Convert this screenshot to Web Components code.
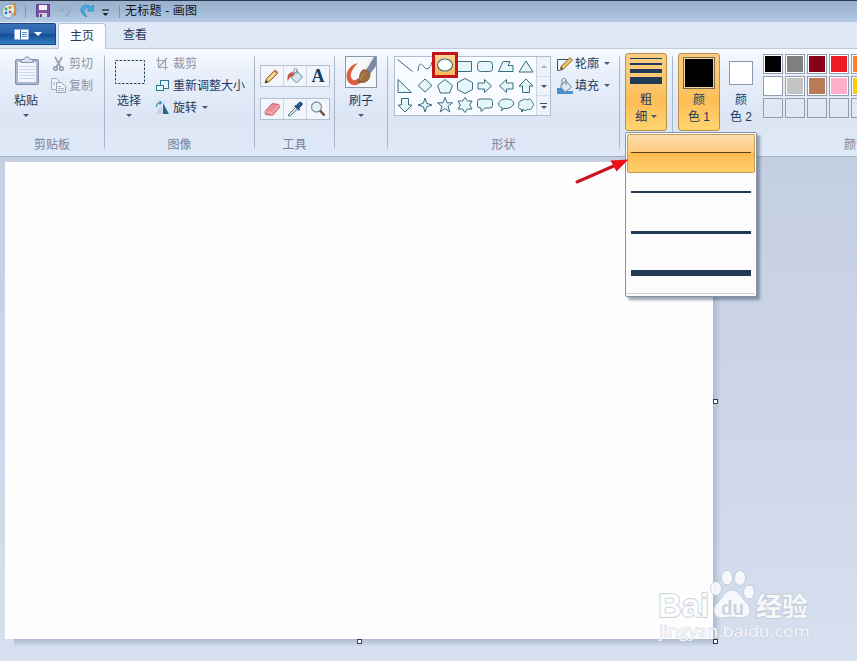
<!DOCTYPE html>
<html lang="zh-CN">
<head>
<meta charset="utf-8">
<title>无标题 - 画图</title>
<style>
    html, body {
        margin: 0;
        height: 100%;
        overflow: hidden;
    }
    body {
        font: 12px/16px "Liberation Sans", "Noto Sans CJK SC", sans-serif;
        color: #1e395b;
    }
</style>
</head>
<body>
<paint-app></paint-app>
<script>
const ink = 'fill="#e6f7fb" stroke="#3b6a82" stroke-width="1" stroke-linejoin="miter"';

const ICONS = {
    palette: `<path d="M9 1C4 1 1 5 1 9c0 4 4 7 8 6 3-1 1-3 2-4s4 0 4-4c0-3-2-6-6-6z" fill="#d6e9ee" stroke="#7398a7"/>
        <circle cx="5" cy="6" r="1.4" fill="#4fa64a"/><circle cx="9" cy="4.5" r="1.4" fill="#d58c20"/>
        <circle cx="5" cy="10" r="1.4" fill="#3675c7"/><circle cx="9" cy="9" r="1.3" fill="#b04a67"/>
        <path d="M14 0v13" stroke="#d98b39" stroke-width="2"/>`,
    save: `<path d="M1.500 1.500h13v12h-13z" fill="#7f51a5" stroke="#61408d"/><path d="M4 2h8v5H4z" fill="#f5f1fa"/><path d="M4 10h8v4H4z" fill="#dcd0e9"/><path d="M5 11h2v3H5z" fill="#61408d"/>`,
    undo: `<path d="M1.500 2v6h6L5.500 6c3-2.500 6-.5 5.500 2.500-.3 2-1.500 3.500-3 5 4-1.500 6-4 6-6.500C14 2 8 .5 3.700 4z" fill="#a3b4cf" stroke="#8fa2c0" stroke-width=".7"/>`,
    redo: `<path d="M14.500 2v6h-6l2-2C7.500 3.500 4.700 5.500 5 8.500c.3 2 1.500 3.500 3 5.500-4-1.500-6-4.500-6-7C2 2 8 .5 12.300 4z" fill="#46b0de" stroke="#1f80b8" stroke-width=".7"/>`,
    custom: `<path d="M1 2h7" stroke="#222" stroke-width="1.300"/><path d="M1.500 5h6l-3 3z" fill="#222"/>`,
    paste: `<rect x="1.500" y="3.500" width="23" height="25" rx="1.500" fill="#a9b6cf" stroke="#8191b0"/>
        <path d="M4 6h18v20H4z" fill="#f3f6fc"/><path d="M5 10.500h16M5 13.500h16M5 16.500h16M5 19.500h16M5 22.500h16" stroke="#ccd6e9"/>
        <path d="M7 6.500V3.500h3C10 0 16 0 16 3.500h3v3z" fill="#dce2ed" stroke="#8191b0"/>`,
    cut: `<path d="M4 1l5.500 10M11 1L5.500 11" stroke="#98a3b6" stroke-width="1.700" fill="none"/><circle cx="4.500" cy="12.500" r="1.800" fill="none" stroke="#8a96ac" stroke-width="1.400"/><circle cx="10.500" cy="12.500" r="1.800" fill="none" stroke="#8a96ac" stroke-width="1.400"/>`,
    copy: `<path d="M.5.5h5l3 3v8h-8z" fill="#eff3fa" stroke="#a3aec2"/><path d="M5.500 4.500h5l4 4v6h-9z" fill="#eff3fa" stroke="#97a4bb"/><path d="M7 8.500h3M7 10.500h6M7 12.500h6M2 4.500h2M2 6.500h2" stroke="#a7b3c8"/>`,
    select: `<rect x=".5" y=".5" width="29" height="23" fill="none" stroke="#26485f" stroke-dasharray="2.500 1.500"/>`,
    crop: `<path d="M3.500 1v10.500H13M1 4.500h9.500V14M4 11l8-9" fill="none" stroke="#9ba5b6" stroke-width="1.200"/>`,
    resize: `<rect x="5.500" y="2.500" width="8" height="8" fill="#e7f6fb" stroke="#31748f"/><rect x="1.500" y="7.500" width="7" height="5" fill="#e7f6fb" stroke="#31748f"/>`,
    rotate: `<path d="M7 5.500V14H1z" fill="#c5cedd"/><path d="M8 3v11h6z" fill="#236593"/><path d="M1.500 7c0-4 2.500-4.500 4.500-4M4.500.8l2 2-2 1.700" fill="none" stroke="#3c8dbb" stroke-width="1.200"/>`,
    pencil: `<path d="M1 15l1.500-4.500L11 2l3 3-8.500 8.500z" fill="#edc268" stroke="#795a2d" stroke-width=".9"/><path d="M1 15l1-3 2 2z" fill="#333"/><path d="M10 3l1.500-1.500 3 3L13 6z" fill="#ce7a66"/><path d="M4 12l7-7" stroke="#fff0bd"/>`,
    bucket: `<path d="M5 8l5-5 5.500 6-6 6-5-5z" fill="#d5e6ee" stroke="#66869a"/><path d="M7 8V2c0-2 3-2 3 0v4" fill="none" stroke="#789"/><path d="M7 4.500C2 3 0 7 .5 13 2 12 2 9 6 8z" fill="#c8583d"/>`,
    eraser: `<path d="M1 10.500L8 2.500l7 1 .5 3-7 8-7-1z" fill="#ec8b91" stroke="#ae5962" stroke-width=".8"/><path d="M1.500 10.500l6.500 1 7-7.500M8 11.500v3" fill="none" stroke="#f9c0c2"/>`,
    dropper: `<path d="M9 5l3-3.500c2-1 4 1 3 2.500L12 7z" fill="#245f94" stroke="#1c4674"/><path d="M8 4.500l4.500 4.500" stroke="#1c4674" stroke-width="2"/><path d="M8.500 6.500L2 13l-.5 2 2-.5L10.500 8z" fill="#dcebf2" stroke="#56738a"/>`,
    lens: `<circle cx="6.500" cy="6" r="5" fill="#e3eff8" stroke="#8b949f" stroke-width="1.300"/><path d="M10 9.500l4.500 5" stroke="#6d533e" stroke-width="2.500"/>`,
    brush: `<rect x=".5" y=".5" width="31" height="31" fill="#f6f7f9" stroke="#8b98aa"/>
        <path d="M13 7C5 9 0 16 2 23s10 8 14 3l-3-4c-2 3-6 3-7-1s2-9 7-14z" fill="#d9603a"/>
        <path d="M28 1h3v9l-6 8-5-4z" fill="#7c8aa5"/><path d="M28 1L20 14" stroke="#e9edf4" stroke-width="2"/>
        <path d="M18 14c3-1 6 1 7 4 0 6-4 10-12 8 2-3 1-10 5-12z" fill="#9c6c3d" stroke="#6c4a2c" stroke-width=".7"/><path d="M20 17c-3 1-3 5-5 7" stroke="#c99a62" fill="none"/>`,
    outline: `<path d="M11 3.500H.5v11c3 0 5-1 6-1.500" fill="none" stroke="#2d526b"/><path d="M3.500 13l1-3 8.500-8.500L15.500 4 7 12.500z" fill="#edc268" stroke="#795a2d" stroke-width=".9"/><path d="M3.500 13l.7-2 1.300 1.300z" fill="#222"/>`,
    fill: `<path d="M0 10h4l3 3h9v3H0z" fill="#4c8dcd"/><path d="M4 7l5-4 5.500 6-6 5-4.500-4z" fill="#dce8ef" stroke="#64839b"/><path d="M5 7V2c0-2 4-2 4 0v5" fill="none" stroke="#64839b"/>`,
    line: `<path d="M.5 1.500l15 12" ${ink}/>`,
    curve: `<path d="M1 13C2 3 5 6 7 9s6 3 8-5" ${ink} style="fill:none"/>`,
    oval: `<ellipse cx="8" cy="8" rx="7.500" ry="6" fill="#fff" stroke="#4d6e71" stroke-width="1.200"/>`,
    rect: `<path d="M.5 3.500h14v10H.5z" ${ink}/>`,
    round: `<rect x=".5" y="3.500" width="15" height="10" rx="3" ${ink}/>`,
    polygon: `<path d="M5 3.500h7l-2 4h5v6H.5z" ${ink}/>`,
    triangle: `<path d="M8 3l7 11H1z" ${ink}/>`,
    rtriangle: `<path d="M1 1.500v13h13.500z" ${ink}/>`,
    diamond: `<path d="M8 1l7 6.500L8 14 1 7.500z" ${ink}/>`,
    pentagon: `<path d="M8 1.500l7.500 6-3 7.500h-9l-3-7.500z" ${ink}/>`,
    hexagon: `<path d="M8 .5l7.500 4v7L8 15.500l-7.500-4v-7z" ${ink}/>`,
    right: `<path d="M1 5h6.500V1.500l7 6.500-7 6.500V11H1z" ${ink}/>`,
    left: `<path d="M15 5H8.500V1.500L1.500 8l7 6.500V11H15z" ${ink}/>`,
    up: `<path d="M8 1l7 7h-3.500v6.500h-7V8H1z" ${ink}/>`,
    down: `<path d="M8 15l7-7h-3.500V1.500h-7V8H1z" ${ink}/>`,
    star4: `<path d="M8 1l1.700 5.300L15 8 9.700 9.700 8 15 6.300 9.700 1 8l5.300-1.700z" ${ink}/>`,
    star5: `<path d="M8 .5l2 5.300h5.500L11 9.300l1.800 5.700L8 11.500 3.200 15 5 9.300.5 5.800H6z" ${ink}/>`,
    star6: `<path d="M8 .5L10.500 4H15l-2.300 4 2.300 4h-4.500L8 15.500 5.500 12H1l2.300-4L1 4h4.500z" ${ink}/>`,
    callout: `<path d="M3 2h10q2.500 0 2.500 2.500v4Q15.500 11 13 11H8l-4 3.500V11H3Q.5 11 .5 8.500v-4Q.5 2 3 2z" ${ink}/>`,
    bubble: `<path d="M3 14l1.500-3C-2 9 0 2 8 2s10 5 5 8q-3 2-7 1.500z" ${ink}/>`,
    cloud: `<path d="M3 12C0 12 0 9 1 8c-1-3 1-5 3-4 1-3 4-2 5-1 3-2 5 0 5 2 2 1 2 4 0 5 0 3-3 3-4 2-2 2-5 2-5 0l-1 3z" ${ink}/>`,
};

class PaintIcon extends HTMLElement {
    connectedCallback() {
        const w = this.getAttribute('w') || 16;
        const h = this.getAttribute('h') || 16;
        this.attachShadow({mode: 'open'}).innerHTML = `
            <style>
                :host { display: inline-flex; flex: none; }
                svg { display: block; overflow: visible; }
            </style>
            <svg width="${w}" height="${h}" viewBox="0 0 ${w} ${h}">${ICONS[this.getAttribute('name')]}</svg>`;
    }
}

class DownArrow extends HTMLElement {
    connectedCallback() {
        this.attachShadow({mode: 'open'}).innerHTML = `
            <style>
                :host {
                    display: inline-block;
                    flex: none;
                    border: solid transparent;
                    border-width: 3px 3px 0;
                    border-top-color: #4c586c;
                }
            </style>`;
    }
}

class TitleBar extends HTMLElement {
    connectedCallback() {
        this.attachShadow({mode: 'open'}).innerHTML = `
            <style>
                :host {
                    display: flex;
                    align-items: center;
                    height: 22px;
                    box-sizing: border-box;
                    border-top: 1px solid #2c3a52;
                    background: linear-gradient(#9ab1cd, #a3bad6 50%, #b6cce6);
                    color: #10141c;
                    letter-spacing: .2px;
                }
                .tools { display: flex; align-items: center; width: 119px; margin-top: -1px; }
                .sep { width: 1px; height: 13px; background: #8092ab; }
                .name { margin-top: -2px; }
            </style>
            <div class="tools">
                <paint-icon name="palette" style="margin-left: 1px"></paint-icon>
                <span class="sep" style="margin: 0 9px 0 8px"></span>
                <paint-icon name="save"></paint-icon>
                <paint-icon name="undo" style="margin-left: 6px"></paint-icon>
                <paint-icon name="redo" style="margin-left: 6px"></paint-icon>
                <paint-icon name="custom" w="9" h="9" style="margin: 2px 0 0 6px"></paint-icon>
            </div>
            <span class="sep" style="margin-right: 5px"></span>
            <span class="name"><slot></slot></span>`;
    }
}

class TabStrip extends HTMLElement {
    connectedCallback() {
        this.attachShadow({mode: 'open'}).innerHTML = `
            <style>
                :host {
                    display: flex;
                    align-items: flex-end;
                    height: 27px;
                    background: #dfe8f6;
                    border-bottom: 1px solid #bccbe0;
                    box-sizing: border-box;
                }
                .file {
                    display: flex;
                    align-items: center;
                    justify-content: center;
                    gap: 5px;
                    width: 56px;
                    height: 22px;
                    margin-bottom: 3px;
                    box-sizing: border-box;
                    border: 1px solid #1c4787;
                    border-left: 0;
                    border-radius: 0 2px 0 0;
                    background: linear-gradient(#3a72b8, #2560a9 48%, #134c95 52%, #3280c5);
                }
                .file down-arrow { border-top-color: #fff; border-width: 4px 4px 0; }
                .tab { height: 24px; line-height: 23px; text-align: center; width: 58px; }
                .active {
                    width: 46px;
                    height: 25px;
                    line-height: 24px;
                    margin: 0 0 -1px 2px;
                    background: #fafcff;
                    border: 1px solid #b4c5dc;
                    border-bottom: 0;
                    border-radius: 3px 3px 0 0;
                }
            </style>
            <div class="file">
                <svg width="15" height="11"><path d="M.5.5h14v10H.5z" fill="#fff"/><path d="M6.500 1v9" stroke="#2b68ac"/><path d="M8 3.500h5M8 5.500h5M8 7.500h5" stroke="#6b8fbd"/></svg>
                <down-arrow></down-arrow>
            </div>
            <div class="tab active">主页</div>
            <div class="tab">查看</div>`;
    }
}

class RibbonGroup extends HTMLElement {
    connectedCallback() {
        this.attachShadow({mode: 'open'}).innerHTML = `
            <style>
                :host {
                    display: flex;
                    flex-direction: column;
                    flex: none;
                    height: 107px;
                    box-sizing: border-box;
                    border: solid transparent;
                    border-image: linear-gradient(transparent 6%, #a9b7cd 9%, #a9b7cd 90%, transparent 94%) 1;
                    border-width: 0 1px 0 0;
                }
                .body { display: flex; height: 89px; box-sizing: border-box; padding-top: 4px; align-items: flex-start; }
                .label { text-align: center; color: #75839b; line-height: 15px; }
            </style>
            <div class="body"><slot></slot></div>
            <div class="label">${this.getAttribute('label') || ''}</div>`;
    }
}

// large icon on top, caption and arrow below
class BigButton extends HTMLElement {
    connectedCallback() {
        this.attachShadow({mode: 'open'}).innerHTML = `
            <style>
                :host {
                    display: flex;
                    flex-direction: column;
                    align-items: center;
                    flex: none;
                    height: 78px;
                    box-sizing: border-box;
                    border: 1px solid transparent;
                    border-radius: 3px;
                }
                :host([checked]) {
                    border-color: #b99147;
                    background: linear-gradient(#f8cd84, #fbc469 45%, #fdbd55 60%, #ffd46f);
                }
                .icon { display: flex; justify-content: center; height: 38px; align-items: center; }
                .text { line-height: 17px; text-align: center; }
                :host([arrow]) .text { margin-top: 1px; }
                .arrow { line-height: 11px; }
                .arrow down-arrow { vertical-align: 2px; }
            </style>
            <div class="icon"><slot name="icon"></slot></div>
            <div class="text"><slot></slot></div>
            ${this.hasAttribute('arrow') ? '<div class="arrow"><down-arrow></down-arrow></div>' : ''}`;
    }
}

class SmallButton extends HTMLElement {
    connectedCallback() {
        this.attachShadow({mode: 'open'}).innerHTML = `
            <style>
                :host { display: flex; align-items: center; height: 22px; gap: 2px; white-space: nowrap; }
                :host([disabled]) { color: #8b95a6; }
                down-arrow { margin: 0 0 2px 3px; }
            </style>
            <paint-icon name="${this.getAttribute('icon')}"></paint-icon>
            <slot></slot>
            ${this.hasAttribute('arrow') ? '<down-arrow></down-arrow>' : ''}`;
    }
}

class ToolBox extends HTMLElement {
    connectedCallback() {
        this.attachShadow({mode: 'open'}).innerHTML = `
            <style>
                :host { display: flex; flex-direction: column; gap: 11px; padding: 12px 0 0 5px; }
                .row { display: flex; border: 1px solid #b2bfd2; background: #f2f6fc; }
                .cell { display: flex; align-items: center; justify-content: center; width: 22px; height: 20px; }
                .cell + .cell { border-left: 1px solid #cdd7e6; }
                b { font: bold 18px/20px "Liberation Serif", serif; color: #173a60; }
            </style>
            <div class="row">
                <div class="cell"><paint-icon name="pencil"></paint-icon></div>
                <div class="cell"><paint-icon name="bucket"></paint-icon></div>
                <div class="cell"><b>A</b></div>
            </div>
            <div class="row">
                <div class="cell"><paint-icon name="eraser"></paint-icon></div>
                <div class="cell"><paint-icon name="dropper"></paint-icon></div>
                <div class="cell"><paint-icon name="lens"></paint-icon></div>
            </div>`;
    }
}

class ShapeGallery extends HTMLElement {
    connectedCallback() {
        const shapes = ['line', 'curve', 'oval', 'rect', 'round', 'polygon', 'triangle',
            'rtriangle', 'diamond', 'pentagon', 'hexagon', 'right', 'left', 'up',
            'down', 'star4', 'star5', 'star6', 'callout', 'bubble', 'cloud'];
        this.attachShadow({mode: 'open'}).innerHTML = `
            <style>
                :host {
                    display: flex;
                    box-sizing: border-box;
                    width: 157px;
                    height: 60px;
                    border: 1px solid #afbdd1;
                    background: #f8fbff;
                }
                .grid {
                    display: grid;
                    grid-template: repeat(3, 19.700px) / repeat(7, 20.100px);
                    place-items: center;
                    width: 141px;
                    margin-top: -1px;
                }
                .cell { display: flex; position: relative; }
                .oval { background: linear-gradient(#f9d596, #fbbb58); padding: 2px; margin: -3px -2px -1px; outline: 3px solid #c3161c; z-index: 1; }
                .scroll { display: flex; flex-direction: column; flex: 1; background: #eef3fb; border-left: 1px solid #c8d3e3; }
                .scroll div { display: flex; flex: 1; flex-direction: column; align-items: center; justify-content: center; gap: 2px; }
                .scroll div + div { border-top: 1px solid #d3dcea; }
                i { width: 7px; height: 1px; background: #3e4b60; }
            </style>
            <div class="grid">${shapes.map(s => `<div class="cell ${s}"><paint-icon name="${s}"></paint-icon></div>`).join('')}</div>
            <div class="scroll">
                <div><down-arrow style="transform: rotate(180deg); opacity: .4"></down-arrow></div>
                <div><down-arrow></down-arrow></div>
                <div><i></i><down-arrow></down-arrow></div>
            </div>`;
    }
}

class ColorPalette extends HTMLElement {
    connectedCallback() {
        const colors = ['#000000', '#7f7f7f', '#880015', '#ed1c24', '#ff7f27',
            '#ffffff', '#c3c3c3', '#b97a57', '#ffaec9', '#ffc90e',
            '', '', '', '', ''];
        this.attachShadow({mode: 'open'}).innerHTML = `
            <style>
                :host { display: grid; grid-template-columns: repeat(5, 20px); gap: 2px; }
                span { height: 20px; box-sizing: border-box; border: 1px solid #929eaf; padding: 1px; }
                span.set { background: linear-gradient(var(--c), var(--c)) content-box, #fff; }
                span.none { background: #e0e8f5; }
            </style>
            ${colors.map(c => `<span class="${c ? 'set' : 'none'}" style="--c: ${c || 'transparent'}"></span>`).join('')}`;
    }
}

class SizeMenu extends HTMLElement {
    connectedCallback() {
        this.attachShadow({mode: 'open'}).innerHTML = `
            <style>
                :host {
                    display: block;
                    box-sizing: border-box;
                    width: 132px;
                    height: 165px;
                    padding: 1px;
                    border: 1px solid #8794a4;
                    border-radius: 2px;
                    background: #fcfcfd;
                    box-shadow: 3px 3px 3px rgba(60, 75, 105, .5);
                }
                div { display: flex; align-items: center; height: 40px; padding: 0 4px; box-sizing: border-box; }
                .on { height: 39px; border: 1px solid #c59b50; border-radius: 2px; padding: 0 3px; background: linear-gradient(#fbdcaa, #fccb7f 45%, #fbbb4f 50%, #ffd06d); }
                span { flex: 1; background: #213b57; }
                footer { border-bottom: 1px solid #ccd2dd; }
            </style>
            <div class="on"><span style="height: 1px; background: #594117; margin-bottom: 2px"></span></div>
            <div><span style="height: 2px; margin-bottom: 2px"></span></div>
            <div><span style="height: 3px; margin-bottom: 1px"></span></div>
            <div><span style="height: 6px"></span></div>
            <footer></footer>`;
    }
}

class RibbonBar extends HTMLElement {
    connectedCallback() {
        this.attachShadow({mode: 'open'}).innerHTML = `
            <style>
                :host {
                    display: flex;
                    height: 108px;
                    box-sizing: border-box;
                    overflow: hidden;
                    background: linear-gradient(#f7faff, #e8effa 25%, #dbe5f4 65%, #e0e9f7);
                    border-bottom: 1px solid #a4b2c8;
                }
                .col { display: flex; flex-direction: column; }
                .sizes { display: flex; flex-direction: column; gap: 4px; width: 32px; margin-top: -4px; }
                .sizes i { background: #213b57; }
                .swatch { box-sizing: border-box; border: 1px solid #8b98aa; }
            </style>
            <ribbon-group label="剪贴板" style="width: 105px">
                <big-button arrow style="width: 46px; margin-left: 3px">
                    <paint-icon slot="icon" name="paste" w="26" h="30" style="margin: -4px 0 0 1px"></paint-icon>粘贴
                </big-button>
                <div class="col">
                    <small-button icon="cut" disabled style="margin-left: 2px">剪切</small-button>
                    <small-button icon="copy" disabled style="margin-left: 2px">复制</small-button>
                </div>
            </ribbon-group>
            <ribbon-group label="图像" style="width: 150px">
                <big-button arrow style="width: 44px; margin-left: 2px">
                    <paint-icon slot="icon" name="select" w="30" h="24" style="margin: -2px 0 0 2px"></paint-icon>选择
                </big-button>
                <div class="col" style="margin-left: 4px">
                    <small-button icon="crop" disabled>裁剪</small-button>
                    <small-button icon="resize">重新调整大小</small-button>
                    <small-button icon="rotate" arrow>旋转</small-button>
                </div>
            </ribbon-group>
            <ribbon-group label="工具" style="width: 80px">
                <tool-box></tool-box>
            </ribbon-group>
            <ribbon-group style="width: 53px">
                <big-button arrow style="width: 46px; margin-left: 3px">
                    <paint-icon slot="icon" name="brush" w="32" h="32" style="margin-top: -2px"></paint-icon>刷子
                </big-button>
            </ribbon-group>
            <ribbon-group label="形状" style="width: 232px">
                <shape-gallery style="margin: 3px 0 0 6px"></shape-gallery>
                <div class="col" style="margin-left: 6px">
                    <small-button icon="outline" arrow>轮廓</small-button>
                    <small-button icon="fill" arrow>填充</small-button>
                </div>
            </ribbon-group>
            <ribbon-group style="width: 53px">
                <big-button checked style="width: 42px; margin-left: 5px">
                    <span class="sizes" slot="icon"><i style="height: 1px"></i><i style="height: 2px"></i><i style="height: 4px"></i><i style="height: 7px"></i></span>
                    粗<br>细 <down-arrow style="vertical-align: 3px"></down-arrow>
                </big-button>
            </ribbon-group>
            <ribbon-group label="颜色" style="width: 367px">
                <big-button checked style="width: 42px; margin-left: 5px">
                    <span class="swatch" slot="icon" style="width: 32px; height: 32px; margin-top: -1px; background: #000; border-color: #7d684a; box-shadow: inset 0 0 0 1px #f4d49d"></span>
                    颜<br>色 1
                </big-button>
                <big-button style="width: 42px">
                    <span class="swatch" slot="icon" style="width: 24px; height: 24px; margin-top: -1px; background: #fff"></span>
                    颜<br>色 2
                </big-button>
                <color-palette style="padding: 1px 0 0 1px"></color-palette>
            </ribbon-group>`;
    }
}

class PaintCanvas extends HTMLElement {
    connectedCallback() {
        this.attachShadow({mode: 'open'}).innerHTML = `
            <style>
                :host {
                    display: block;
                    flex: 1;
                    box-sizing: border-box;
                    padding: 5px 0 0 5px;
                    background: linear-gradient(#c5cfe2, #cdd6e8 50%, #d6e0f0);
                }
                .sheet {
                    position: relative;
                    width: 708px;
                    height: 477px;
                    background: #fefefe;
                }
                /* shadow starts a little in from the left edge */
                .sheet::before {
                    content: '';
                    position: absolute;
                    z-index: -1;
                    inset: 9px 0 0 9px;
                }
                .sheet { box-shadow: 0 0 0 #000; }
                .side, .under { position: absolute; }
                .side { left: 708px; top: 4px; width: 8px; height: 473px; background: linear-gradient(90deg, #aebbce, #aebbce00); }
                .under { left: 9px; top: 477px; width: 703px; height: 8px; background: linear-gradient(#adbacd, #adbacd00); }
                .handle {
                    position: absolute;
                    width: 5px;
                    height: 5px;
                    box-sizing: border-box;
                    border: 1px solid #333b46;
                    background: #fff;
                }
            </style>
            <div class="sheet">
                <span class="side"></span>
                <span class="under"></span>
                <span class="handle" style="left: 708px; top: 237px"></span>
                <span class="handle" style="left: 352px; top: 477px"></span>
                <span class="handle" style="left: 708px; top: 477px"></span>
            </div>`;
    }
}

class WaterMark extends HTMLElement {
    connectedCallback() {
        this.attachShadow({mode: 'open'}).innerHTML = `
            <style>
                :host { display: block; width: 160px; height: 80px; }
                svg { display: block; }
                text { fill: #fff; fill-opacity: .85; stroke: #c3cbd8; stroke-opacity: .8; paint-order: stroke; }
            </style>
            <svg width="160" height="80" viewBox="0 0 160 80">
                <g fill="#fff" fill-opacity=".8" stroke="#b9c3d3" stroke-opacity=".8">
                    <ellipse cx="59" cy="20.500" rx="5.500" ry="7"/>
                    <ellipse cx="70" cy="9.500" rx="5.500" ry="7.500"/>
                    <ellipse cx="83" cy="10" rx="5.500" ry="7.500"/>
                    <ellipse cx="92" cy="24" rx="5.500" ry="7"/>
                    <path d="M75 22c7 0 9 7 13 11 9 8 5 17-3 17-4 0-6-1-10-1s-6 1-10 1c-8 0-12-9-3-17 4-4 6-11 13-11z"/>
                </g>
                <text x="1" y="49" textLength="51" lengthAdjust="spacingAndGlyphs" font-family="Liberation Sans" font-weight="bold" font-size="34" stroke-width="2">Bai</text>
                <text x="64" y="47" textLength="23" lengthAdjust="spacingAndGlyphs" font-family="Liberation Sans" font-weight="bold" font-size="21" style="fill: #c3ccda; stroke: none">du</text>
                <text x="99" y="48" textLength="52" lengthAdjust="spacingAndGlyphs" font-family="Noto Sans CJK SC" font-weight="bold" font-size="26" stroke-width="2">经验</text>
                <text x="2" y="69" textLength="151" lengthAdjust="spacingAndGlyphs" font-family="Open Sans" font-size="17" stroke-width="1">jingyan.baidu.com</text>
            </svg>`;
    }
}

class PaintApp extends HTMLElement {
    connectedCallback() {
        this.attachShadow({mode: 'open'}).innerHTML = `
            <style>
                :host { display: flex; flex-direction: column; height: 100vh; position: relative; overflow: hidden; }
                size-menu { position: absolute; left: 625px; top: 132px; }
                .pointer { position: absolute; left: 574px; top: 156px; }
                water-mark { position: absolute; left: 657px; top: 568px; }
            </style>
            <title-bar>无标题 - 画图</title-bar>
            <tab-strip></tab-strip>
            <ribbon-bar></ribbon-bar>
            <paint-canvas></paint-canvas>
            <size-menu></size-menu>
            <svg class="pointer" width="56" height="30">
                <path d="M3 26L42 9" stroke="#c8141e" stroke-width="3" stroke-linecap="round"/>
                <path d="M54.500 3.500L36.500 4.500l6 11z" fill="#f0101a"/>
            </svg>
            <water-mark></water-mark>`;
    }
}

customElements.define('paint-icon', PaintIcon);
customElements.define('down-arrow', DownArrow);
customElements.define('title-bar', TitleBar);
customElements.define('tab-strip', TabStrip);
customElements.define('ribbon-group', RibbonGroup);
customElements.define('big-button', BigButton);
customElements.define('small-button', SmallButton);
customElements.define('tool-box', ToolBox);
customElements.define('shape-gallery', ShapeGallery);
customElements.define('color-palette', ColorPalette);
customElements.define('size-menu', SizeMenu);
customElements.define('ribbon-bar', RibbonBar);
customElements.define('paint-canvas', PaintCanvas);
customElements.define('water-mark', WaterMark);
customElements.define('paint-app', PaintApp);
</script>
</body>
</html>
